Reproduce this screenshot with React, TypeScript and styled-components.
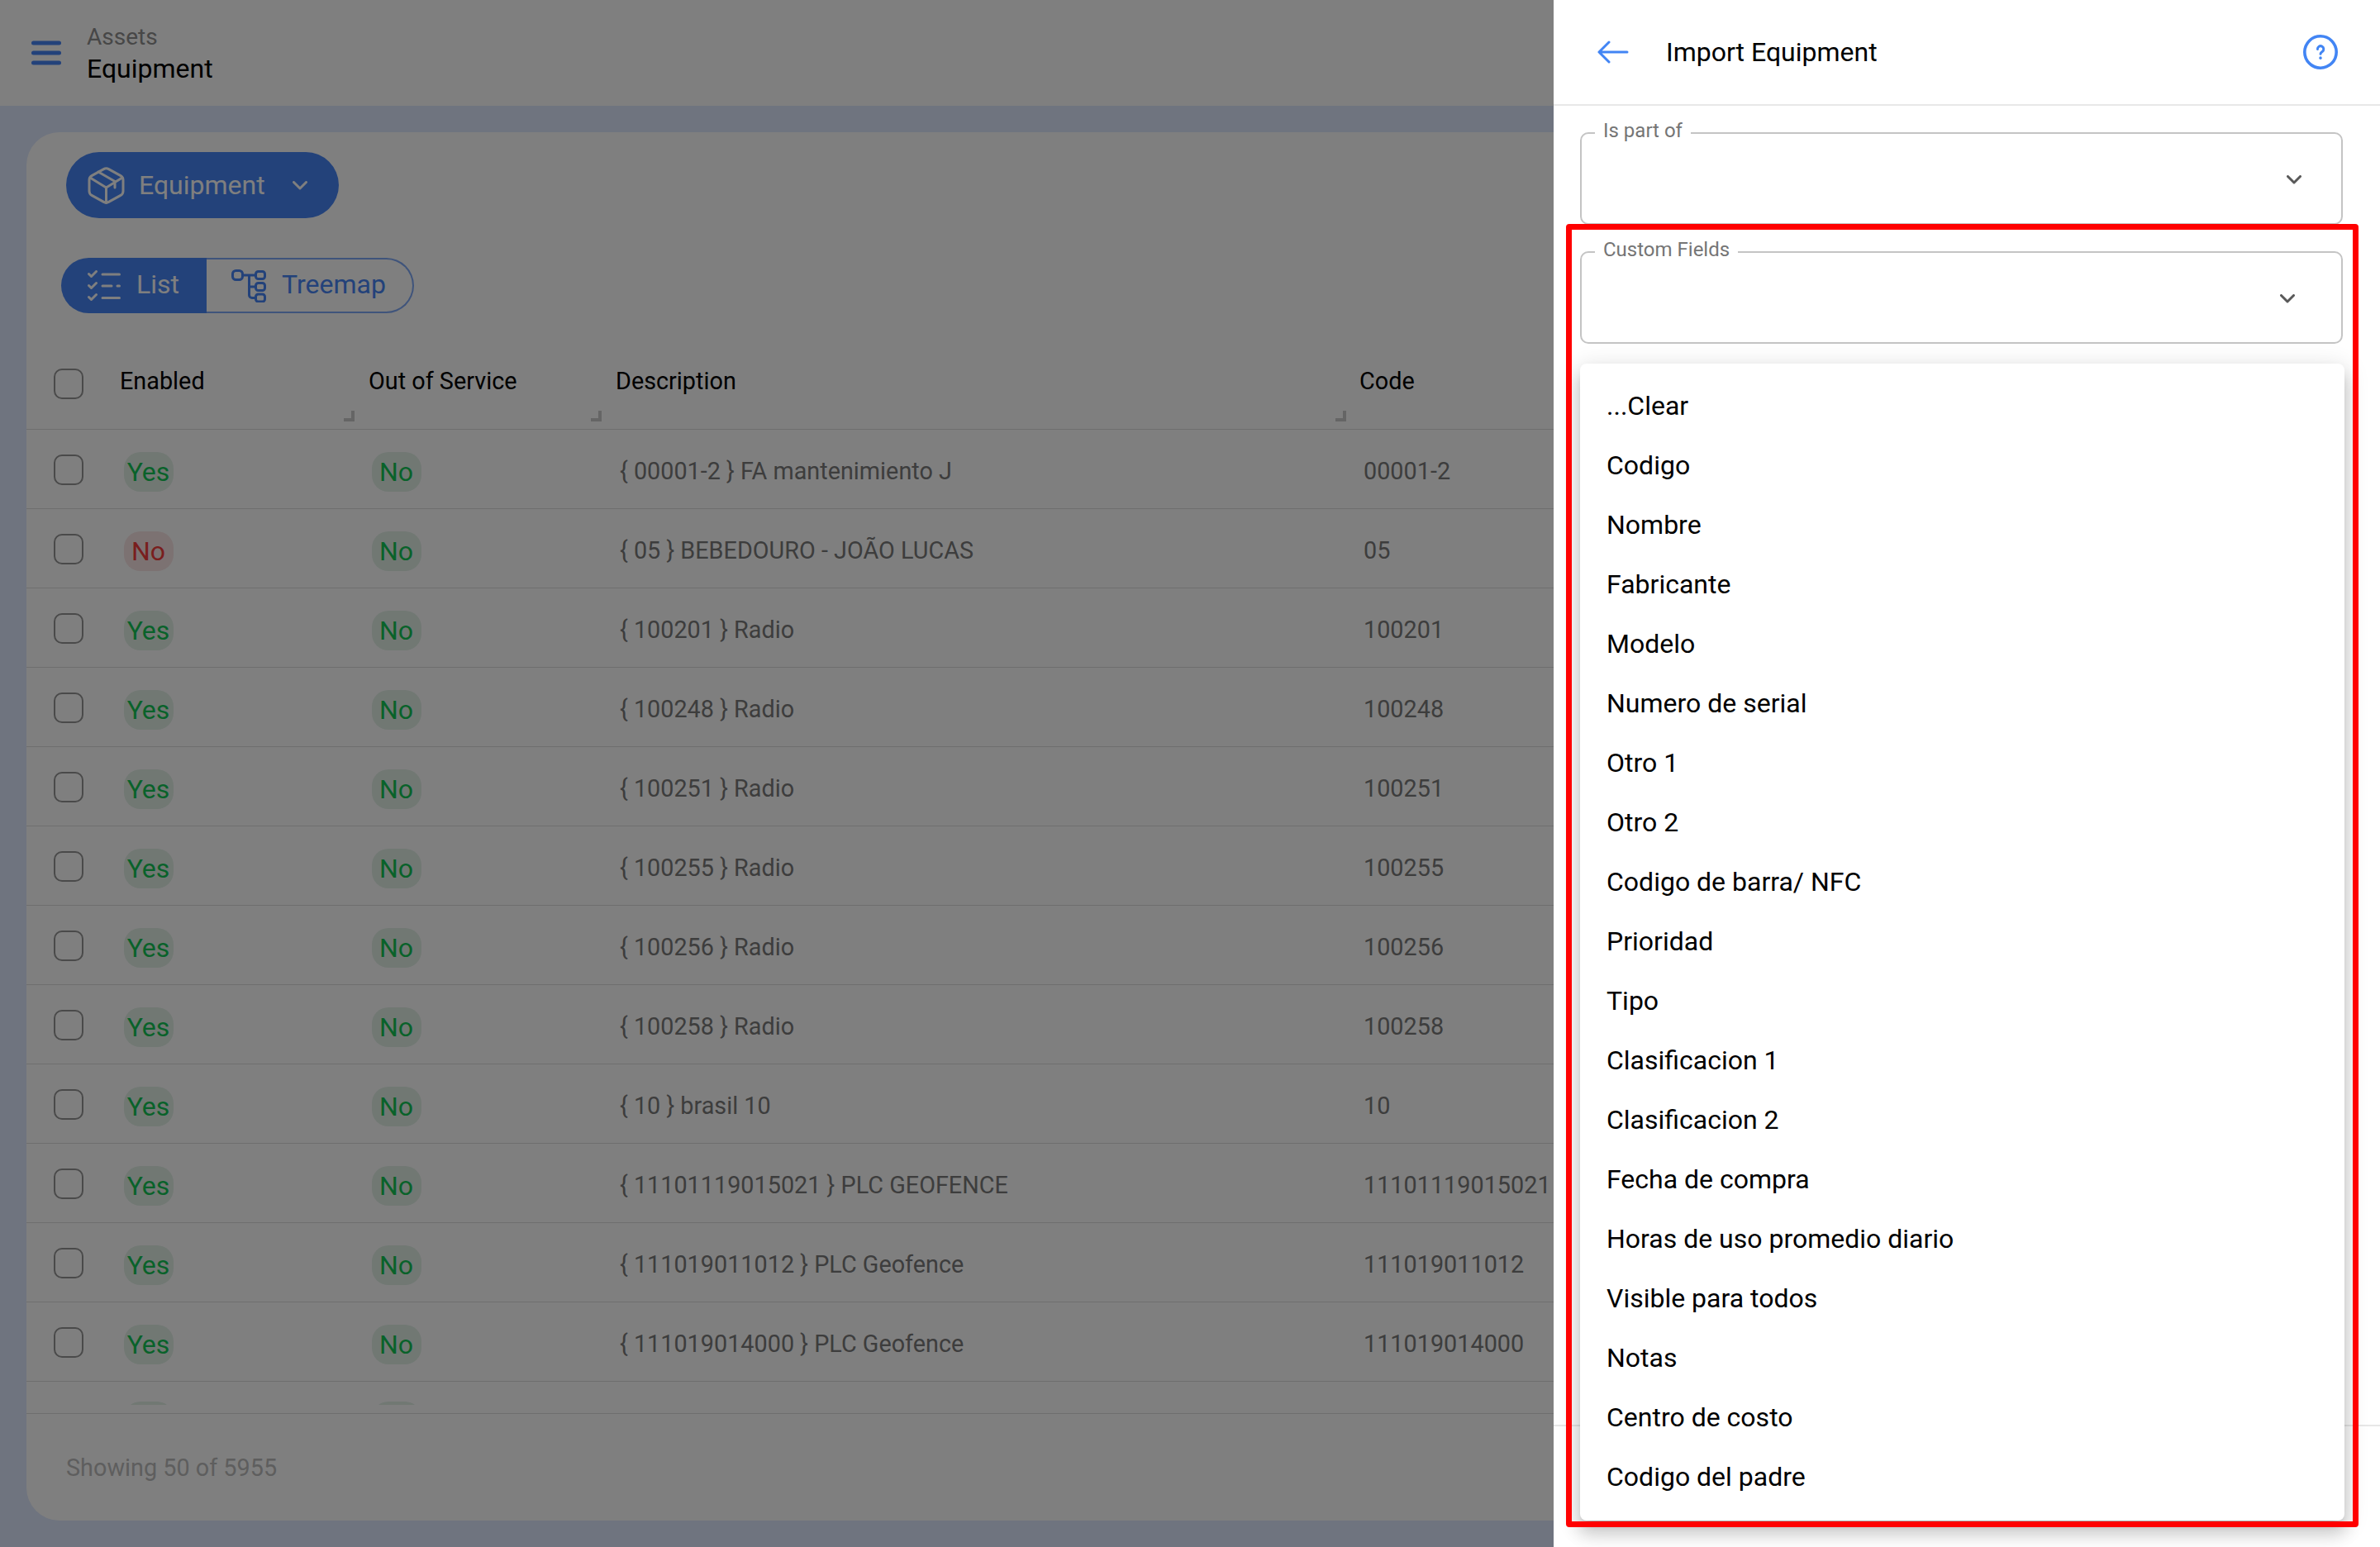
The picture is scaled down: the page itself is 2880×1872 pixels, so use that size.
import React from "react";
import styled, { createGlobalStyle } from "styled-components";

const Global = createGlobalStyle`
  html, body { margin: 0; padding: 0; width: 2880px; height: 1872px; overflow: hidden; }
  body { font-family: Roboto, "Liberation Sans", sans-serif; background: #fff; }
  * { box-sizing: border-box; }
`;

const BLUE = "#4684f4";

const Screen = styled.div`
  position: relative;
  width: 2880px;
  height: 1872px;
  overflow: hidden;
  display: flex;
  flex-direction: column;
`;
const TopBar = styled.header`
  height: 128px;
  flex: none;
  background: #fff;
  display: flex;
  align-items: center;
  padding-left: 38px;
  gap: 31px;
`;
const Burger = styled.svg`
  width: 36px;
  height: 30px;
  flex: none;
`;
const Crumbs = styled.div`
  display: flex;
  flex-direction: column;
`;
const CrumbParent = styled.span`
  font-size: 28px;
  line-height: 38px;
  color: #8f8f8f;
`;
const CrumbCurrent = styled.span`
  font-size: 32px;
  line-height: 38px;
  color: #000;
`;
const Main = styled.main`
  flex: 1;
  min-height: 0;
  background: #dee8ff;
  padding: 32px;
  display: flex;
`;
const Card = styled.section`
  flex: 1;
  background: #fff;
  border-radius: 40px;
  display: flex;
  flex-direction: column;
  overflow: hidden;
`;
const TypeButton = styled.div`
  margin: 24px 0 0 48px;
  width: 330px;
  height: 80px;
  border-radius: 40px;
  background: ${BLUE};
  color: #fff;
  font-size: 32px;
  display: flex;
  align-items: center;
  padding-left: 26px;
  flex: none;
`;
const TypeLabel = styled.span`
  margin-left: 17px;
  margin-right: 33px;
`;
const ViewToggle = styled.div`
  margin: 48px 0 0 42px;
  height: 67px;
  width: 427px;
  display: flex;
  flex: none;
  font-size: 32px;
`;
const ViewOption = styled.div<{ $active?: boolean }>`
  display: flex;
  align-items: center;
  height: 100%;
  ${(p) =>
    p.$active
      ? `
    width: 176px;
    padding-left: 32px;
    gap: 19px;
    background: ${BLUE};
    color: #fff;
    border-radius: 34px 0 0 34px;
  `
      : `
    flex: 1;
    padding-left: 30px;
    gap: 19px;
    color: ${BLUE};
    border: 2px solid #7fa8f6;
    border-left: none;
    border-radius: 0 34px 34px 0;
  `}
`;
const ViewLabel = styled.span`
  margin-top: -3px;
`;
const HeadRow = styled.div`
  margin-top: 45px;
  height: 96px;
  flex: none;
  display: grid;
  grid-template-columns: 113px 301px 299px 900px 1fr;
  border-bottom: 1px solid #dcdcdc;
  font-size: 28.8px;
  line-height: 32px;
  color: #000;
`;
const HeadCell = styled.div`
  position: relative;
  padding-top: 21px;
`;
const ResizeHandle = styled.span<{ $right: number }>`
  position: absolute;
  right: ${(p) => p.$right}px;
  top: 73px;
  width: 13px;
  height: 13px;
  border-right: 4px solid #cbcbcb;
  border-bottom: 4px solid #cbcbcb;
`;
const CheckCell = styled.div<{ $top: number }>`
  padding: ${(p) => p.$top}px 0 0 33px;
`;
const Check = styled.span`
  display: block;
  width: 36px;
  height: 37px;
  border: 2px solid #949494;
  border-radius: 10px;
`;
const Body = styled.div`
  height: 1180px;
  flex: none;
  overflow: hidden;
`;
const Row = styled.div`
  height: 96px;
  display: grid;
  grid-template-columns: 114px 300px 300px 900px 1fr;
  align-items: center;
  border-bottom: 1px solid #dcdcdc;
  font-size: 28.8px;
  line-height: 32px;
  color: #7a7a7a;
`;
const ChipCell = styled.div`
  padding: 6px 0 0 3.5px;
`;
const Chip = styled.span<{ $bad?: boolean }>`
  display: inline-flex;
  justify-content: center;
  align-items: center;
  min-width: 60px;
  height: 48px;
  padding: 0 4px;
  border-radius: 20px;
  font-size: 32px;
  line-height: 48px;
  color: ${(p) => (p.$bad ? "#f23c3c" : "#12c455")};
  background: ${(p) => (p.$bad ? "#f8e4e4" : "#e2f0e7")};
`;
const TextCell = styled.div`
  padding: 4px 0 0 4px;
  white-space: nowrap;
`;
const Footer = styled.footer`
  margin-top: auto;
  height: 130px;
  flex: none;
  border-top: 1px solid #dcdcdc;
  display: flex;
  align-items: center;
  padding-left: 48px;
  font-size: 28.8px;
  color: #bdbdbd;
`;
const Scrim = styled.div`
  position: absolute;
  inset: 0;
  background: rgba(0, 0, 0, 0.5);
`;
const Drawer = styled.aside`
  position: absolute;
  top: 0;
  right: 0;
  bottom: 0;
  width: 1000px;
  background: #fff;
  display: flex;
  flex-direction: column;
`;
const DrawerHead = styled.div`
  height: 128px;
  flex: none;
  display: flex;
  align-items: center;
  padding: 0 51px 0 53px;
  border-bottom: 2px solid #e8e8e8;
`;
const DrawerTitle = styled.h1`
  margin: 0 0 0 45px;
  font-size: 32px;
  font-weight: 400;
  color: #000;
  flex: 1;
`;
const DrawerBody = styled.div`
  flex: 1;
  padding: 32px 45px 0 32px;
  display: flex;
  flex-direction: column;
  gap: 32px;
`;
const Field = styled.div<{ $chevronInset: number }>`
  position: relative;
  height: 112px;
  border: 2px solid #c4c4c4;
  border-radius: 10px;
  display: flex;
  align-items: center;
  justify-content: flex-end;
  padding: 3px ${(p) => p.$chevronInset}px 0 0;
`;
const FieldLabel = styled.span`
  position: absolute;
  left: 16px;
  top: -18px;
  padding: 0 10px;
  background: #fff;
  font-size: 24px;
  line-height: 28px;
  color: #757575;
`;
const DrawerFoot = styled.div`
  height: 148px;
  flex: none;
  border-top: 2px solid #e8e8e8;
`;
const Menu = styled.ul`
  position: absolute;
  left: 32px;
  top: 440px;
  width: 925px;
  height: 1400px;
  margin: 0;
  padding: 15px 0;
  list-style: none;
  background: #fff;
  border-radius: 8px;
  box-shadow: 0 10px 10px -6px rgba(0, 0, 0, 0.2), 0 16px 20px 2px rgba(0, 0, 0, 0.14),
    0 6px 28px 4px rgba(0, 0, 0, 0.12);
`;
const MenuItem = styled.li`
  height: 72px;
  padding-left: 32px;
  font-size: 32px;
  line-height: 72px;
  color: #000;
`;
const Highlight = styled.div`
  position: absolute;
  left: 15px;
  top: 271px;
  width: 959px;
  height: 1577px;
  border: 7px solid #ff0000;
  border-radius: 4px;
  pointer-events: none;
`;

const Chevron = () => (
  <svg width="18" height="11" viewBox="0 0 18 11" fill="none">
    <path d="M1.5 1.5 9 9l7.5-7.5" stroke="#595959" strokeWidth="3" strokeLinecap="round" strokeLinejoin="round" />
  </svg>
);

const BoxIcon = () => (
  <svg width="45" height="45" viewBox="0 0 45 45" fill="none" stroke="#fff" strokeWidth="3" strokeLinecap="round" strokeLinejoin="round">
    <path d="M19.5 2.6a6 6 0 0 1 6 0l14.5 8a6 6 0 0 1 3 5.2v13.4a6 6 0 0 1-3 5.2l-14.5 8a6 6 0 0 1-6 0l-14.5-8a6 6 0 0 1-3-5.2V15.8a6 6 0 0 1 3-5.2z" />
    <path d="M3 13 22.5 25 42 13M22.5 25v18.5M13 6 33 17.5V25" />
  </svg>
);

const ListIcon = () => (
  <svg width="40" height="38" viewBox="0 0 40 38" fill="none" stroke="#fff" strokeWidth="3" strokeLinecap="round" strokeLinejoin="round">
    <path d="M1.5 4.5 4.5 7.5 10.5 1.5M1.5 18.5 4.5 21.5 10.5 15.5M1.5 32.5 4.5 35.5 10.5 29.5" />
    <path d="M18 5h20.5M18 19h11M36 19h2.5M18 33.5h20.5" />
  </svg>
);

const TreeIcon = () => (
  <svg width="42" height="40" viewBox="0 0 42 40" fill="none" stroke={BLUE} strokeWidth="3" strokeLinecap="round" strokeLinejoin="round">
    <rect x="1.5" y="1.5" width="12" height="11" rx="4" />
    <rect x="29.5" y="2.5" width="11" height="9" rx="3" />
    <rect x="29.5" y="16.5" width="11" height="9" rx="3" />
    <rect x="29.5" y="30" width="11" height="9" rx="3" />
    <path d="M13.5 7h16M21.5 7v24a3.5 3.5 0 0 0 3.5 3.5h4.5M21.5 21h8" />
  </svg>
);

const rows: [boolean, string, string][] = [
  [true, "{ 00001-2 } FA mantenimiento J", "00001-2"],
  [false, "{ 05 } BEBEDOURO - JOÃO LUCAS", "05"],
  [true, "{ 100201 } Radio", "100201"],
  [true, "{ 100248 } Radio", "100248"],
  [true, "{ 100251 } Radio", "100251"],
  [true, "{ 100255 } Radio", "100255"],
  [true, "{ 100256 } Radio", "100256"],
  [true, "{ 100258 } Radio", "100258"],
  [true, "{ 10 } brasil 10", "10"],
  [true, "{ 11101119015021 } PLC GEOFENCE", "11101119015021"],
  [true, "{ 111019011012 } PLC Geofence", "111019011012"],
  [true, "{ 111019014000 } PLC Geofence", "111019014000"],
];

const options = [
  "...Clear", "Codigo", "Nombre", "Fabricante", "Modelo", "Numero de serial", "Otro 1", "Otro 2",
  "Codigo de barra/ NFC", "Prioridad", "Tipo", "Clasificacion 1", "Clasificacion 2", "Fecha de compra",
  "Horas de uso promedio diario", "Visible para todos", "Notas", "Centro de costo", "Codigo del padre",
];

export default function App() {
  return (
    <Screen>
      <Global />
      <TopBar>
        <Burger viewBox="0 0 36 30" fill="none" stroke={BLUE} strokeWidth="5" strokeLinecap="round">
          <path d="M2.5 3h31M2.5 15h31M2.5 27h31" />
        </Burger>
        <Crumbs>
          <CrumbParent>Assets</CrumbParent>
          <CrumbCurrent>Equipment</CrumbCurrent>
        </Crumbs>
      </TopBar>
      <Main>
        <Card>
          <TypeButton>
            <BoxIcon />
            <TypeLabel>Equipment</TypeLabel>
            <svg width="18" height="11" viewBox="0 0 18 11" fill="none">
              <path d="M1.5 1.5 9 9l7.5-7.5" stroke="#fff" strokeWidth="3" strokeLinecap="round" strokeLinejoin="round" />
            </svg>
          </TypeButton>
          <ViewToggle>
            <ViewOption $active>
              <ListIcon />
              <ViewLabel>List</ViewLabel>
            </ViewOption>
            <ViewOption>
              <TreeIcon />
              <ViewLabel>Treemap</ViewLabel>
            </ViewOption>
          </ViewToggle>
          <HeadRow>
            <CheckCell $top={22}>
              <Check />
            </CheckCell>
            <HeadCell>
              Enabled
              <ResizeHandle $right={17} />
            </HeadCell>
            <HeadCell>
              Out of Service
              <ResizeHandle $right={17} />
            </HeadCell>
            <HeadCell>
              Description
              <ResizeHandle $right={16} />
            </HeadCell>
            <HeadCell>Code</HeadCell>
          </HeadRow>
          <Body>
            {rows.map(([enabled, description, code]) => (
              <Row key={code}>
                <CheckCell $top={2}>
                  <Check />
                </CheckCell>
                <ChipCell>
                  <Chip $bad={!enabled}>{enabled ? "Yes" : "No"}</Chip>
                </ChipCell>
                <ChipCell>
                  <Chip>No</Chip>
                </ChipCell>
                <TextCell>{description}</TextCell>
                <TextCell>{code}</TextCell>
              </Row>
            ))}
            <Row>
              <span />
              <ChipCell>
                <Chip />
              </ChipCell>
              <ChipCell>
                <Chip />
              </ChipCell>
            </Row>
          </Body>
          <Footer>Showing 50 of 5955</Footer>
        </Card>
      </Main>
      <Scrim />
      <Drawer>
        <DrawerHead>
          <svg width="38" height="28" viewBox="0 0 38 28" fill="none" stroke="#4285f4" strokeWidth="3" strokeLinecap="round" strokeLinejoin="round">
            <path d="M2 14h34M14 2 2 14l12 12" />
          </svg>
          <DrawerTitle>Import Equipment</DrawerTitle>
          <svg width="42" height="42" viewBox="0 0 42 42" fill="none" stroke="#4285f4" strokeLinecap="round">
            <circle cx="21" cy="21" r="19.2" strokeWidth="3.6" />
            <path d="M17.4 17.4a3.7 3.7 0 1 1 5.8 3c-1.4 1-2.2 1.5-2.2 2.9" strokeWidth="3" />
            <path d="M21 28v.2" strokeWidth="3.4" />
          </svg>
        </DrawerHead>
        <DrawerBody>
          <Field $chevronInset={48}>
            <FieldLabel>Is part of</FieldLabel>
            <Chevron />
          </Field>
          <Field $chevronInset={56}>
            <FieldLabel>Custom Fields</FieldLabel>
            <Chevron />
          </Field>
        </DrawerBody>
        <DrawerFoot />
        <Menu>
          {options.map((o) => (
            <MenuItem key={o}>{o}</MenuItem>
          ))}
        </Menu>
        <Highlight />
      </Drawer>
    </Screen>
  );
}
